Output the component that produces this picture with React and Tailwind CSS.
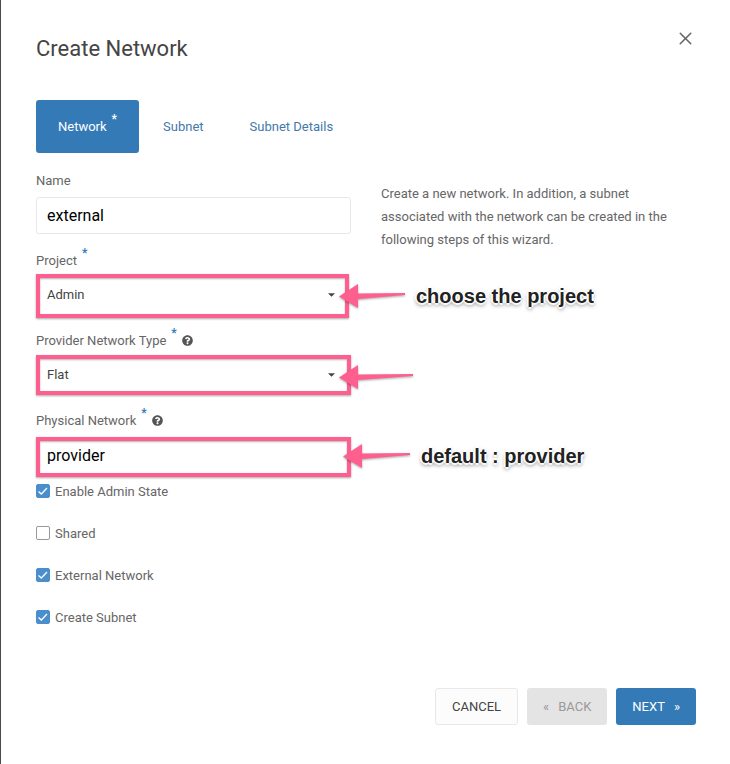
// src/components/network/CreateNetworkWizard.jsx
import React, { useState } from 'react';
import { X } from 'lucide-react';
import { FaQuestionCircle } from 'react-icons/fa';

const steps = [
  { id: 'network', title: 'Network', required: true },
  { id: 'subnet', title: 'Subnet' },
  { id: 'details', title: 'Subnet Details' },
];

const options = [
  { id: 'admin_state', label: 'Enable Admin State', checked: true },
  { id: 'shared', label: 'Shared', checked: false },
  { id: 'external', label: 'External Network', checked: true },
  { id: 'with_subnet', label: 'Create Subnet', checked: true },
];

const Required = ({ className = '' }) => (
  <sup className={`top-0 self-start text-[12px] leading-none font-bold ${className}`}>*</sup>
);

const Field = ({ id, label, required, help, children }) => (
  <div className="mb-[17px]">
    <div className="mb-1.5 flex h-5 items-center">
      <label htmlFor={id} className="flex h-5 gap-[5px] leading-5">
        {label}
        {required && <Required className="-mt-1 text-[#337ab7]" />}
      </label>
      {help && <FaQuestionCircle className="mb-px ml-[5px] size-[11px] text-[#555]" />}
    </div>
    <div className="relative">{children}</div>
  </div>
);

const Select = ({ id, value }) => (
  <>
    <select id={id} defaultValue={value} className="block h-[37px] w-full appearance-none bg-white pr-8 pb-0.5 pl-[11px] text-[13px] text-[#444] outline-none">
      <option>{value}</option>
    </select>
    <svg viewBox="0 0 8 4" className="pointer-events-none absolute top-4 right-4 h-1 w-[7px] fill-[#444]">
      <path d="M0 0h8L4 4z" />
    </svg>
  </>
);

const Highlight = ({ className }) => (
  <div className={`pointer-events-none absolute left-0 border-4 border-[#ff5f8f] shadow-[0_1px_2px_rgba(0,0,0,0.35),inset_0_1px_2px_rgba(0,0,0,0.3)] ${className}`} />
);

// Arrow that points back at a field, with an optional note after it
const Callout = ({ className, length, children }) => (
  <div className={`pointer-events-none absolute left-full flex h-6 items-center gap-[11px] whitespace-nowrap ${className}`}>
    <svg width={length} height="24" className="shrink-0 overflow-visible fill-[#ff5f8f] drop-shadow-[0_1px_1px_rgba(0,0,0,0.35)]">
      <path d={`M0 12.5 19 0v9.5L${length} 9v2L19 15v9z`} />
    </svg>
    {children && (
      <span className="font-['Liberation_Sans',Arial,sans-serif] text-[20px] leading-6 font-bold text-[#222] [text-shadow:-2px_0_1px_#fff,2px_0_1px_#fff,0_-2px_1px_#fff,0_2px_1px_#fff,0_2px_4px_rgba(0,0,0,0.7)]">
        {children}
      </span>
    )}
  </div>
);

const App = () => {
  const [activeStep, setActiveStep] = useState('network');

  return (
    <div className="min-h-screen border-l border-[#4a4a4e] bg-white pr-[34px] pb-10 pl-[35px] font-[Roboto,sans-serif] text-[13px] text-[#666]">
      <header className="flex items-start justify-between pt-7">
        <h1 className="pt-[7px] text-[22px] leading-7 text-[#444]">Create Network</h1>
        <button type="button" aria-label="Close" className="text-[#666]">
          <X size={21} strokeWidth={1.75} />
        </button>
      </header>

      <nav className="mt-[37px] flex gap-0.5">
        {steps.map((step) => (
          <button
            key={step.id}
            type="button"
            onClick={() => setActiveStep(step.id)}
            className={`flex h-[53px] items-center rounded-[3px] px-[22px] ${
              activeStep === step.id ? 'bg-[#337ab7] text-white' : 'text-[#4379ab]'
            }`}
          >
            <span className="flex h-5 gap-[5px] leading-5">
              {step.title}
              {step.required && <Required className="-mt-1" />}
            </span>
          </button>
        ))}
      </nav>

      <main className="mt-[18px] grid grid-cols-2 gap-[30px]">
        <form>
          <Field id="name" label="Name">
            <input
              id="name"
              type="text"
              defaultValue="external"
              className="block h-[37px] w-full rounded-[3px] border border-[#e8e8e8] px-2.5 text-[16px] text-black outline-none"
            />
          </Field>

          <Field id="project" label="Project" required>
            <Select id="project" value="Admin" />
            <Highlight className="-top-[3px] right-0.5 -bottom-1" />
            <Callout className="top-[7px] -ml-3" length={66}>choose the project</Callout>
          </Field>

          <Field id="type" label="Provider Network Type" required help>
            <Select id="type" value="Flat" />
            <Highlight className="-top-0.5 right-0 -bottom-px" />
            <Callout className="top-2 -ml-3" length={74} />
          </Field>

          <Field id="physical" label="Physical Network" required help>
            <input
              id="physical"
              type="text"
              defaultValue="provider"
              className="block h-[37px] w-full px-[11px] text-[16px] text-black outline-none"
            />
            <Highlight className="top-0 right-0 -bottom-[3px]" />
            <Callout className="top-[7px] -ml-2" length={67}>default : provider</Callout>
          </Field>

          <div className="-mt-2.5 flex flex-col gap-5">
            {options.map((option) => (
              <label key={option.id} className="flex h-[22px] items-center gap-[5px]">
                <span className="relative mb-0.5 size-3.5">
                  <input
                    type="checkbox"
                    defaultChecked={option.checked}
                    className="peer block size-3.5 appearance-none rounded-[2px] border border-[#999] bg-white checked:border-[#4a8fcb] checked:bg-[#4a8fcb]"
                  />
                  <svg viewBox="0 0 14 14" className="pointer-events-none absolute inset-0 hidden size-3.5 fill-none stroke-white peer-checked:block" strokeWidth="1.3">
                    <path d="M2.5 7.5 5.3 10 11 4" />
                  </svg>
                </span>
                {option.label}
              </label>
            ))}
          </div>
        </form>

        <p className="pt-[11px] pr-4 leading-[23px]">
          Create a new network. In addition, a subnet associated with the network can be created in the following steps of this wizard.
        </p>
      </main>

      <footer className="mt-[59px] flex justify-end gap-[9px]">
        <button type="button" className="h-[37px] rounded-[3px] border border-[#e8e8e8] bg-[#fcfcfc] px-4 text-[#444]">
          CANCEL
        </button>
        <button type="button" disabled className="flex h-[37px] items-center gap-[9px] rounded-[3px] bg-[#e4e4e4] px-4 text-[#999]">
          <span>«</span> BACK
        </button>
        <button type="button" className="flex h-[37px] items-center gap-[9px] rounded-[3px] bg-[#337ab7] px-4 text-white">
          NEXT <span>»</span>
        </button>
      </footer>
    </div>
  );
};

export default App;
